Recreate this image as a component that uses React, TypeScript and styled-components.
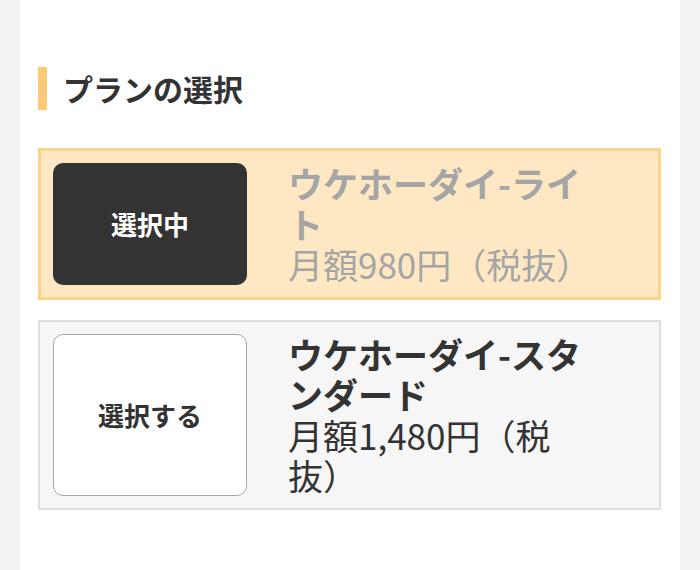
import React from "react";
import styled, { createGlobalStyle } from "styled-components";

const GlobalStyle = createGlobalStyle`
  html, body {
    margin: 0;
    padding: 0;
    background: #f2f2f2;
  }
  body {
    font-family: "Noto Sans CJK JP", "Noto Sans", sans-serif;
    color: #333;
  }
`;

const Page = styled.div`
  padding: 0 20px;
`;

const Panel = styled.main`
  background: #ffffff;
  min-height: 570px;
  box-sizing: border-box;
  padding: 67px 19px 40px 18px;
`;

const Heading = styled.h2`
  margin: 0 0 38px;
  border-left: 9px solid #fdc976;
  padding-left: 16px;
  font-size: 30px;
  font-weight: 700;
  line-height: 43px;
  color: #333;
`;

const PlanList = styled.div`
  display: flex;
  flex-direction: column;
  gap: 20px;
`;

const PlanCard = styled.div<{ $selected: boolean }>`
  display: flex;
  align-items: stretch;
  gap: 41px;
  border: ${(p) => (p.$selected ? "3px solid #fcd388" : "2px solid #dedede")};
  background: ${(p) => (p.$selected ? "#fee8c3" : "#f6f6f6")};
  padding: ${(p) => (p.$selected ? "12px 12px" : "12px 13px")};
`;

const SelectButton = styled.button<{ $selected: boolean }>`
  flex: 0 0 194px;
  display: flex;
  align-items: center;
  justify-content: center;
  border-radius: 10px;
  font-family: inherit;
  font-size: 26px;
  font-weight: 700;
  cursor: pointer;
  border: ${(p) => (p.$selected ? "none" : "1.5px solid #a8a8a8")};
  background: ${(p) => (p.$selected ? "#333333" : "#ffffff")};
  color: ${(p) => (p.$selected ? "#ffffff" : "#333333")};
`;

const PlanInfo = styled.div<{ $selected: boolean }>`
  width: 302px;
  color: ${(p) => (p.$selected ? "#a5a5a5" : "#333333")};
  font-size: 35px;
  line-height: 40.5px;
`;

const PlanName = styled.div`
  font-weight: 700;
`;

const PlanPrice = styled.div`
  font-weight: 400;
`;

const plans = [
  { name: "ウケホーダイ-ライト", price: "月額980円（税抜）", selected: true },
  { name: "ウケホーダイ-スタンダード", price: "月額1,480円（税抜）", selected: false },
];

export default function App() {
  return (
    <>
      <GlobalStyle />
      <Page>
        <Panel>
          <Heading>プランの選択</Heading>
          <PlanList>
            {plans.map((plan) => (
              <PlanCard key={plan.name} $selected={plan.selected}>
                <SelectButton $selected={plan.selected}>
                  {plan.selected ? "選択中" : "選択する"}
                </SelectButton>
                <PlanInfo $selected={plan.selected}>
                  <PlanName>{plan.name}</PlanName>
                  <PlanPrice>{plan.price}</PlanPrice>
                </PlanInfo>
              </PlanCard>
            ))}
          </PlanList>
        </Panel>
      </Page>
    </>
  );
}
